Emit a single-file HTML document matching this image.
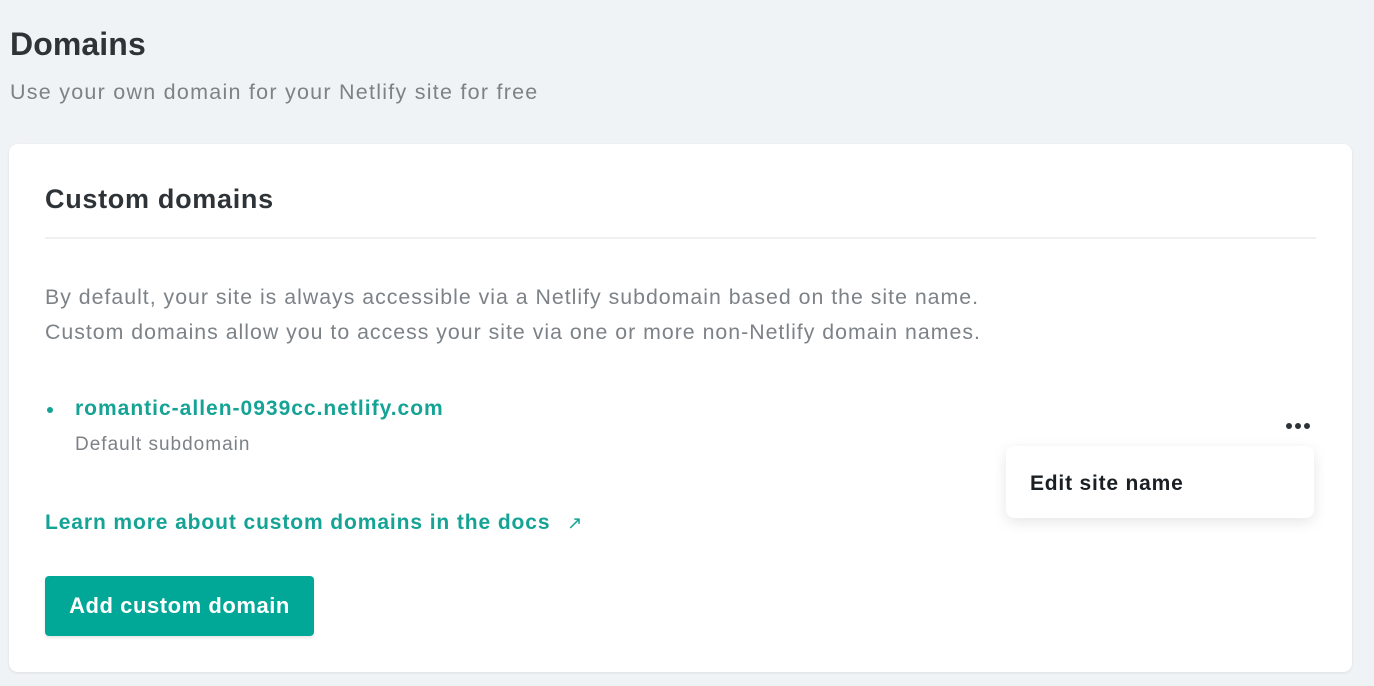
<!DOCTYPE html>
<html><head><meta charset="utf-8"><style>
*{margin:0;padding:0;box-sizing:border-box}
body{width:1374px;height:686px;background:#f0f3f6;font-family:"Liberation Sans",sans-serif;position:relative;overflow:hidden;color:#2e3338}
.abs{position:absolute;white-space:nowrap}
.card{position:absolute;left:9px;top:144px;width:1343px;height:528px;background:#fff;border-radius:9px;box-shadow:0 1px 3px rgba(0,0,0,.08)}
.sep{position:absolute;left:45px;top:237px;width:1271px;height:2px;background:#eef0f2}
.gray{color:#7d8287}
.teal{color:#14a394}
.btn{position:absolute;left:45px;top:576px;width:269px;height:60px;background:#02a897;border-radius:4px;color:#fff;font-size:22px;font-weight:bold;line-height:60px;text-align:center;letter-spacing:.55px;box-shadow:0 2px 3px rgba(0,0,0,.1)}
.menu{position:absolute;left:1006px;top:446px;width:308px;height:72px;background:#fff;border-radius:8px;box-shadow:0 4px 14px rgba(0,0,0,.1)}
.dot{position:absolute;width:6px;height:6px;border-radius:50%;background:#2e3338;top:423px}
</style></head><body>
<div class="abs" style="left:10px;top:26px;font-size:32px;font-weight:bold;color:#2e3338;letter-spacing:.1px">Domains</div>
<div class="abs gray" style="left:10px;top:80px;font-size:21.5px;letter-spacing:1.25px">Use your own domain for your Netlify site for free</div>
<div class="card"></div>
<div class="abs" style="left:45px;top:184px;font-size:27px;font-weight:bold;color:#2e3338;letter-spacing:.7px">Custom domains</div>
<div class="sep"></div>
<div class="abs gray" style="left:45px;top:280px;font-size:21.3px;line-height:35px;letter-spacing:1px">By default, your site is always accessible via a Netlify subdomain based on the site name.<br>Custom domains allow you to access your site via one or more non-Netlify domain names.</div>
<div class="abs" style="left:47px;top:407px;width:6px;height:6px;border-radius:50%;background:#14a394"></div>
<div class="abs teal" style="left:75px;top:397px;font-size:21px;font-weight:bold;letter-spacing:1px">romantic-allen-0939cc.netlify.com</div>
<div class="abs gray" style="left:75px;top:434px;font-size:19px;letter-spacing:1px">Default subdomain</div>
<div class="abs teal" style="left:45px;top:511px;font-size:21px;font-weight:bold;letter-spacing:.9px">Learn more about custom domains in the docs <span style="font-weight:normal;font-size:18px;margin-left:10px">↗</span></div>
<div class="btn">Add custom domain</div>
<div class="dot" style="left:1286px"></div><div class="dot" style="left:1295px"></div><div class="dot" style="left:1304px"></div>
<div class="menu"></div>
<div class="abs" style="left:1030px;top:472px;font-size:21px;font-weight:bold;color:#1a1f24;letter-spacing:.8px">Edit site name</div>
</body></html>
